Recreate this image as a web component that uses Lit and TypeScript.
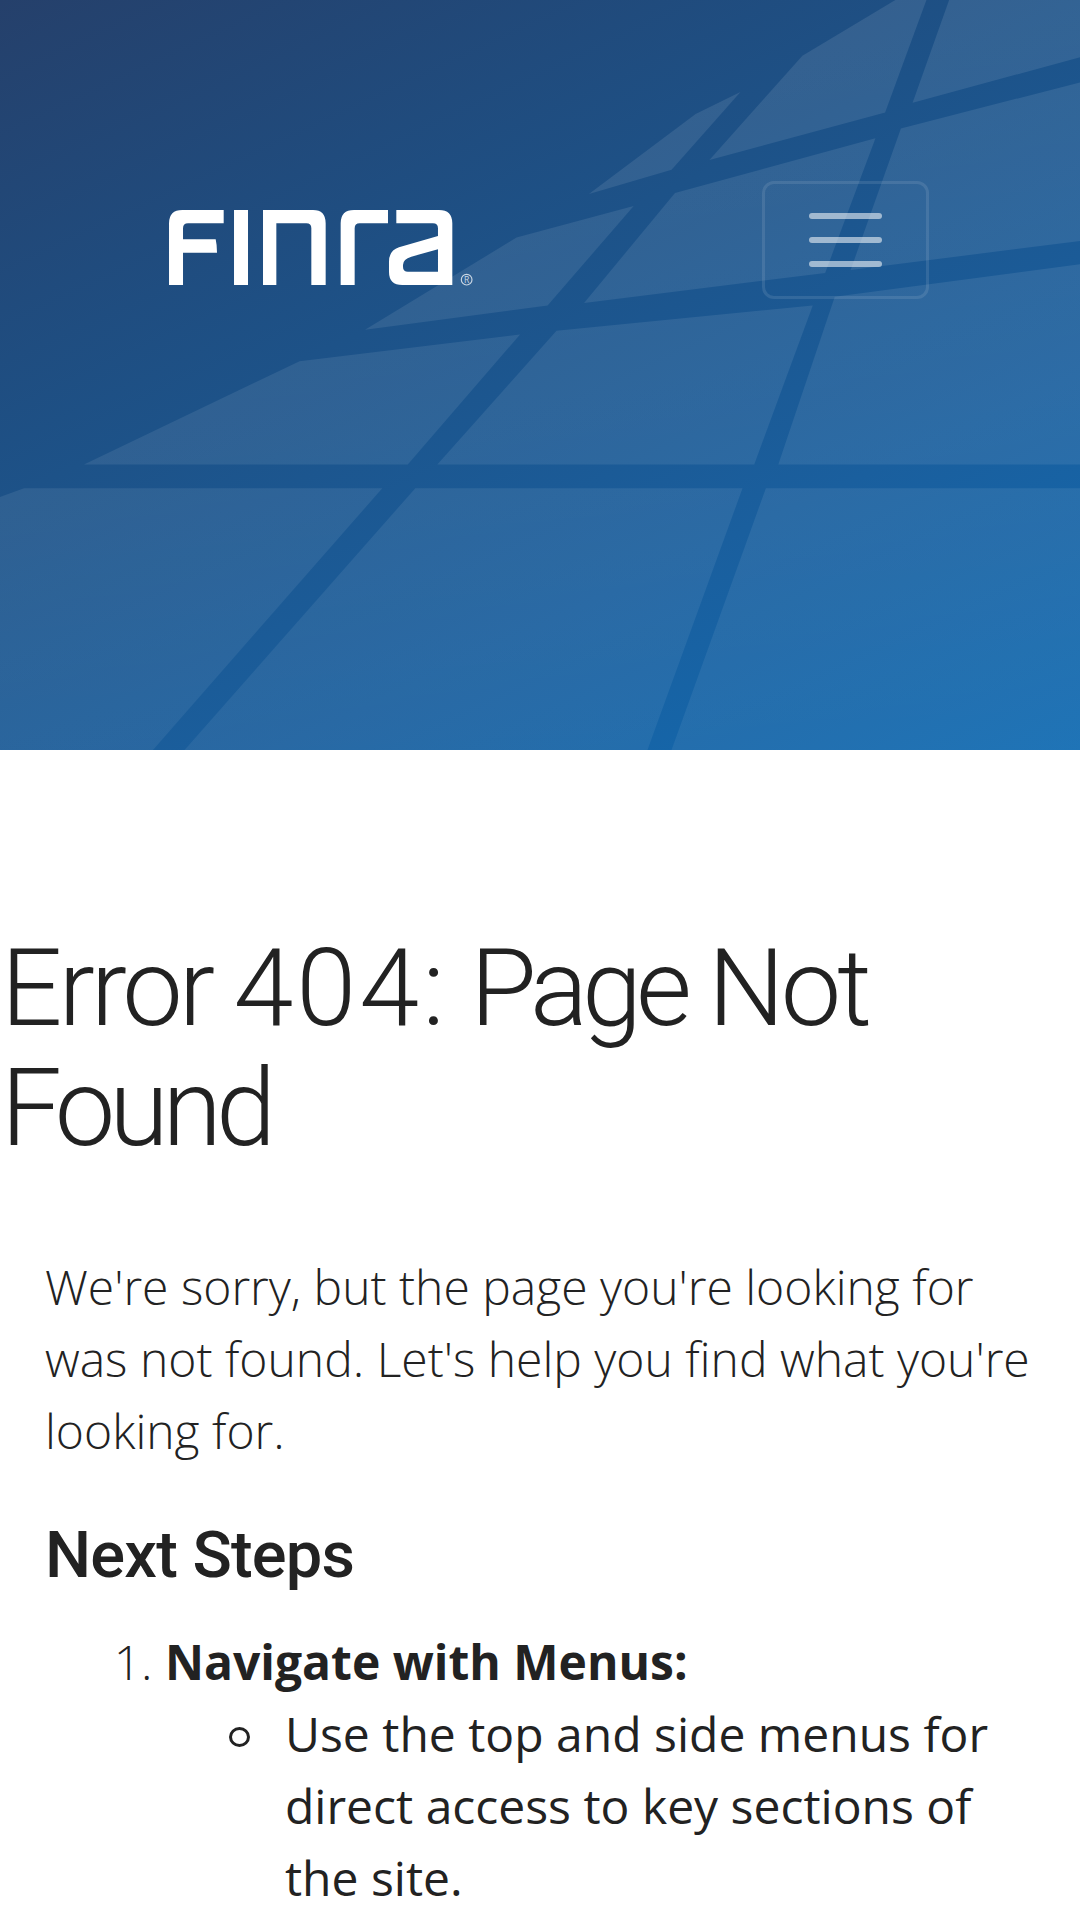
import { LitElement, html, css, svg } from 'lit';
import { customElement } from 'lit/decorators.js';

// window panes of the hero art, in a 1568x1547 space stretched onto the 1080x750 hero
const PANES = [
  '0,1025 35,1007 555,1007 222,1547 0,1547',
  '603,1007 1078,1007 940,1547 268,1547',
  '1112,1007 1568,1007 1568,1547 975,1547',
  '122,958 592,958 755,690 435,745',
  '635,958 1095,958 1180,630 808,682',
  '1130,958 1568,958 1568,545 1212,612',
  '530,680 795,630 920,425 750,490',
  '848,625 1198,563 1271,285 980,398',
  '1235,557 1568,497 1568,170 1308,265',
  '855,400 975,350 1075,190 1010,235',
  '1030,330 1285,232 1345,0 1300,0 1165,115',
  '1325,212 1568,118 1568,0 1378,0',
];

@customElement('app-root')
export class AppRoot extends LitElement {
  static styles = css`
    :host {
      display: block;
      height: 1920px;
      overflow: hidden;
      background: #fff;
      color: #222;
      font-family: "Open Sans", "Liberation Sans", sans-serif;
      font-size: 48px;
      line-height: 72px;
      font-weight: 300;
    }
    .hero {
      display: grid;
      height: 750px;
      background: linear-gradient(155deg, #25406b 0%, #1d5288 40%, #1a5f9e 70%, #116bb2 100%);
    }
    .art, .nav { grid-area: 1 / 1; }
    .art { width: 1080px; height: 750px; display: block; }
    .nav {
      display: flex;
      justify-content: space-between;
      align-items: flex-start;
      padding: 181px 151px 0 169px;
    }
    .logo { display: block; width: 304px; height: 76.67px; margin-top: 29px; }
    .logo text { font-family: "Open Sans", sans-serif; font-size: 26px; font-weight: 400; fill: #c9d6e4; }
    .toggler {
      box-sizing: border-box;
      width: 167px;
      height: 118px;
      border: 3px solid rgba(255, 255, 255, 0.1);
      border-radius: 12px;
      background: none;
      padding: 0;
      display: flex;
      flex-direction: column;
      align-items: center;
      justify-content: center;
      gap: 18px;
    }
    .toggler span {
      width: 73px;
      height: 6px;
      border-radius: 3px;
      background: rgba(255, 255, 255, 0.55);
    }
    h1 {
      margin: 178px 0 0 1px;
      font-family: Roboto, sans-serif;
      font-weight: 300;
      font-size: 108px;
      line-height: 120px;
      letter-spacing: -4px;
    }
    h1 .digits { letter-spacing: 3px; }
    h1 .narrow { letter-spacing: -6px; }
    .content { padding: 83px 46px 0 45px; }
    p { margin: 0 0 52px; }
    h2 {
      margin: 0 0 35px;
      font-family: Roboto, sans-serif;
      font-weight: 500;
      font-size: 65px;
      line-height: 72px;
      letter-spacing: -0.8px;
    }
    ol, ul { margin: 0; padding-left: 120px; }
    ul { list-style: none; font-weight: 400; }
    ul li::before {
      content: "";
      display: inline-block;
      box-sizing: border-box;
      width: 21px;
      height: 20px;
      margin: 0 35px 0 -56px;
      border: 3.5px solid #222;
      border-radius: 50%;
      vertical-align: 5px;
    }
    strong { font-weight: 700; }
  `;

  render() {
    return html`
      <header class="hero">
        <svg class="art" viewBox="0 0 1568 1547" preserveAspectRatio="none">
          <defs>
            <linearGradient id="pane" gradientUnits="userSpaceOnUse" x1="1000" y1="0" x2="1200" y2="1547">
              <stop offset="0" stop-color="#fff" stop-opacity="0.1"></stop>
              <stop offset="0.6" stop-color="#fff" stop-opacity="0.08"></stop>
              <stop offset="1" stop-color="#fff" stop-opacity="0.06"></stop>
            </linearGradient>
          </defs>
          ${PANES.map((p) => svg`<polygon points=${p} fill="url(#pane)"></polygon>`)}
        </svg>
        <nav class="nav">
          <svg class="logo" viewBox="88 150 912 230" role="img" aria-label="FINRA">
            <g fill="#fff" fill-rule="evenodd">
              <path d="M88 375V190Q88 150 128 150H252V190H145Q130 190 130 205V238H228Q232 255 232 278H130V375Z"></path>
              <path d="M283 150H325V375H283Z"></path>
              <path d="M370 150H520Q558 150 558 190V375H515V205Q515 190 500 190H410V375H370Z"></path>
              <path d="M603 375V190Q603 150 643 150H745V190H660Q645 190 645 205V375Z"></path>
              <path d="M770 150H898Q938 150 938 190V375H788Q748 375 748 335V305Q748 272 778 262L895 228V205Q895 190 880 190H770ZM895 268L815 290Q790 297 790 315V320Q790 335 805 335H895Z"></path>
            </g>
            <circle cx="981" cy="359" r="16" fill="none" stroke="#c9d6e4" stroke-width="3.5"></circle>
            <text x="981" y="368" text-anchor="middle">R</text>
          </svg>
          <button class="toggler" aria-label="Menu"><span></span><span></span><span></span></button>
        </nav>
      </header>
      <main>
        <h1>Error <span class="digits">404:</span> <span class="narrow">Page</span> Not <span class="narrow">Found</span></h1>
        <div class="content">
          <p>We're sorry, but the page you're looking for was not found. Let's help you find what you're looking for.</p>
          <h2>Next Steps</h2>
          <ol>
            <li>
              <strong>Navigate with Menus:</strong>
              <ul>
                <li>Use the top and side menus for direct access to key sections of the site.</li>
              </ul>
            </li>
          </ol>
        </div>
      </main>
    `;
  }
}
